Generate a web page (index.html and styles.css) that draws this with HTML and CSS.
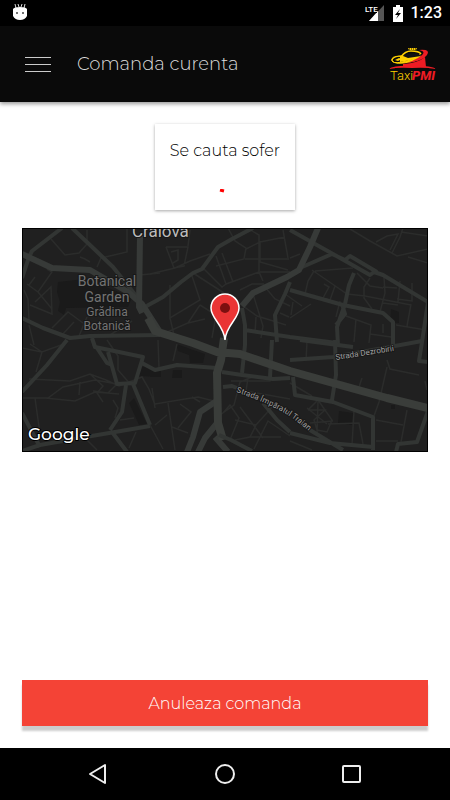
FILE: index.html
```html
<!DOCTYPE html>
<html lang="ro">
<head>
    <meta charset="UTF-8">
    <meta name="viewport" content="width=device-width, initial-scale=1.0">
    <title>Comanda curenta</title>
    <link rel="stylesheet" href="styles.css">
</head>
<body>
    <div class="status-bar">
        <svg class="droid" width="14" height="18" viewBox="0 0 14 18" aria-hidden="true">
            <path d="M3 4L2 0M6 3L5 0M8 3L9 0M11 4L12 0" stroke="#ddd" fill="none"/>
            <path d="M0 5Q1 3 7 3T14 5V12Q12 16 7 16T0 12Z" fill="#fff"/>
            <circle cx="4" cy="9" r="1" fill="#444"/>
            <circle cx="10" cy="9" r="1" fill="#444"/>
        </svg>
        <div class="status-icons">
            <svg width="20" height="18" viewBox="0 0 20 18" aria-hidden="true">
                <path d="M19 1V17H4Z" fill="#555"/>
                <path d="M13 7V17H4Z" fill="#fff"/>
                <path d="M0 0H12V9H0Z" fill="#000"/>
                <text x="0" y="8" class="lte">LTE</text>
            </svg>
            <svg width="10" height="17" viewBox="0 0 10 17" aria-hidden="true">
                <path d="M3 0H7V2H10V17H0V2H3Z" fill="#fff"/>
                <path d="M7 4L2 10H5L3 14L8 8H5Z" fill="#000"/>
            </svg>
            <span class="clock">1:23</span>
        </div>
    </div>

    <header class="app-bar">
        <button type="button" class="menu-button" aria-label="Meniu">
            <span></span><span></span><span></span>
        </button>
        <h1>Comanda curenta</h1>
        <svg class="logo" width="50" height="37" viewBox="387 46 50 37" role="img" aria-label="TaxiPMI">
            <path d="M408 48h9l-1 2h-7z" fill="#ffd000"/>
            <path d="M409 49h8" stroke="#111" stroke-dasharray="1 1"/>
            <path d="M401 57Q405 51 411 51Q419 51 421 54" fill="none" stroke="#ffd000" stroke-width="1.5"/>
            <path d="M402 56Q394 56 392 60Q392 64 402 62L420 58Q420 60 409 62Q396 65 392 61Q390 56 402 56Z" fill="#ffd000" stroke="#ffd000"/>
            <path d="M400 56L420 54L421 58L400 62Z" fill="#ffd000"/>
            <path d="M403 56Q408 52 419 54L421 56L408 58Z" fill="#111"/>
            <path d="M395 60l4-2 3 1-4 2z" fill="#ffd000"/>
            <path d="M419 50Q431 49 427 55Q423 61 407 63Q420 58 423 54Q425 51 419 50Z" fill="#ed1c24"/>
            <path d="M403 67V64Q418 63 425 57L426 67Q414 65 403 67Z" fill="#ed1c24"/>
            <path d="M388 69Q396 65 412 66Q428 65 437 69Q425 67 412 68Q399 67 388 69Z" fill="#ed1c24"/>
            <text x="390" y="80" class="logo-taxi">Taxi</text>
            <text x="412" y="80" class="logo-pmi">PMI</text>
        </svg>
    </header>

    <main class="content">
        <div class="card">
            <p>Se cauta sofer</p>
            <svg width="6" height="4" viewBox="0 0 6 4" aria-hidden="true">
                <path d="M1 1L5 2" stroke="#f00" stroke-width="3"/>
            </svg>
        </div>

        <div class="map">
            <svg viewBox="22 228 406 224" preserveAspectRatio="xMidYMid slice" role="img" aria-label="Harta Craiova">
                <rect x="22" y="228" width="406" height="224" fill="#202020"/>

                <!-- parks and buildings -->
                <g fill="#1a1a1a">
                    <path d="M58 282L85 279L132 297L128 307L66 308L64 315L58 311L60 302L57 292Z"/>
                    <path d="M391 309L399 312V323L390 322Z"/>
                    <path d="M129 403L134 398L147 424L139 425Z"/>
                    <path d="M140 366L160 371V377L139 376Z"/>
                    <path d="M176 344L205 354L203 363H190L189 355L178 351Z"/>
                    <path d="M150 371H161V377H150ZM173 370H182V378H172ZM339 411L353 413L352 425L338 423ZM391 405h4v4h-4z"/>
                </g>

                <g class="street">
                    <path d="M51 239L65 255L79 253L87 244V230M80 257L85 259L90 262M127 228V252L101 258L97 267"/>
                    <path d="M27 284L38 292L52 272L47 269M29 285L35 277M30 305L52 314L51 287L35 302M24 290L28 299L29 320M38 292L52 309"/>
                    <path d="M52 328L68 312L83 323M62 335L74 322M91 338L94 348M29 325L34 345M140 275L160 273M132 321L110 335M87 317L79 336"/>
                    <path d="M166 247H188L184 266L174 268L166 247M171 252L178 250V260L173 263M188 246L190 230M150 274L175 268L190 261L210 254"/>
                    <path d="M216 256L226 284L222 287L203 268M222 253L233 282M192 276L200 300L170 318V285M200 305L188 323L165 333M193 273L224 293M188 323L205 319M200 305L216 315L212 338M170 318L174 335"/>
                    <path d="M228 228L235 241L246 248L244 259L216 266M246 249L260 242L285 237M245 259H289M247 228L259 235V274M260 272H290M283 230L288 258M260 241V262L288 270M226 284L259 272L263 281M240 290L252 284H264"/>
                    <path d="M243 306L257 316L270 320L286 325M253 294L263 326L261 338M265 287L275 299L290 306M256 317L255 333M285 294L302 306M280 313L289 317"/>
                    <path d="M350 229L370 241L397 256L428 249M376 242L387 236L398 234L390 250M403 228L400 237L392 253M408 257L428 263M401 232L428 236"/>
                    <path d="M290 258L300 254M314 271L308 281L305 294L330 300L335 286M324 284L329 287L323 298M312 270L347 294L365 296M315 271L353 268M357 273L370 286L383 288M370 278L364 287V298L372 309M384 277L385 293L380 312M400 281L398 302M383 287L397 288M365 296L411 305M397 299L412 301V283M411 304L407 326M396 325L426 330M383 303L398 305"/>
                    <path d="M290 318L311 304M293 302L291 315M346 316L371 325L369 343M356 319L354 342M370 334L391 337M383 324V333M336 317L340 301"/>
                    <path d="M22 348L42 352L36 372M30 344L42 352L64 344M29 379L70 381L90 374L106 380L119 386M22 398L48 398L63 387L95 380M35 398L40 434M45 398L75 401L95 392L119 394M80 382L79 395M90 374L103 386L97 393L103 402M95 380L117 384L108 393L93 391M107 340L118 356V370L131 385"/>
                    <path d="M119 386L142 377L149 389L155 405M113 400L118 408L115 418M120 420L134 418M136 432L129 448M85 438L97 450M155 404L185 399L198 397L218 402M152 388L155 408M168 403L175 450M172 427L188 433M180 404L191 412L178 428M192 397L200 402"/>
                    <path d="M150 425L163 449M155 425L167 415M177 344L173 361M158 340L159 368M220 415L234 405L240 382L252 377M230 440L239 418L230 405L223 413M235 420L256 425L250 437L235 440M240 407L263 438M255 426L274 405M254 449L268 421L290 436M231 381H270L271 371M248 378L246 391L290 399M249 437H281"/>
                    <path d="M307 341L306 361M387 360L390 369L419 375M387 367L379 402L374 416M362 378L359 387M290 383L312 396M308 410L318 400L332 420L327 432L317 430L314 420L325 410L308 410M318 402L317 433M310 423L333 421M307 408L327 424M354 411L352 445M376 420L403 425M407 410L401 442M328 424L359 423L363 444M290 441L312 450M425 381L427 390M376 441H398"/>
                </g>

                <g class="road">
                    <path d="M62 228L32 251L29 257L22 278"/>
                    <path d="M22 318L43 328L70 338L90 336L160 335"/>
                    <path d="M67 340L47 365L22 392"/>
                    <path d="M72 228L90 245L113 267L137 297"/>
                    <path d="M143 308L163 297L181 282L193 273L202 269L218 247L232 239L253 228"/>
                    <path d="M92 338L95 347L143 357L135 383L117 384L108 352M97 348L107 363L112 365M142 363L155 370L177 365L217 368"/>
                    <path d="M126 385L122 412L110 430M133 384L150 425M22 413L40 447M22 451L40 445L80 438L150 426M112 432L127 452"/>
                    <path d="M242 308L245 325V345L242 373M245 330L290 337L337 343M277 342L275 315L285 294L290 282"/>
                    <path d="M222 372L242 375L273 379L290 378M223 387L232 386L237 388M263 403L277 420L290 432"/>
                    <path d="M290 230L333 254L370 275L374 272L383 275L428 302M300 268L332 254L345 260L350 256L377 272M354 273L349 285L345 304L337 327L338 345M342 304L345 314L336 325"/>
                    <path d="M290 290L343 305L383 313L393 322V345M428 302L422 342L419 361L428 362"/>
                    <path d="M272 340L270 377M290 360L333 357L395 346L422 341M300 340L353 347M335 340L336 375L332 400M293 377L295 395L333 402L373 417V450M290 433L330 443L373 447M300 423L310 430L343 450M428 411L417 442L398 444L396 452"/>
                </g>

                <g class="avenue">
                    <path d="M22 254L52 268L90 270L128 292L142 304L160 332"/>
                    <path d="M140 236L139 307L142 313"/>
                    <path d="M318 228L310 247L299 270L287 277L253 293L242 306"/>
                    <path d="M218 400L200 412L193 437L187 452M218 422L205 438L198 452M215 437L228 452"/>
                </g>
                <path class="avenue-wide" d="M148 318L155 331L193 343L217 352L240 354L290 371L333 383L387 398L428 408M224 338L221 360L217 373L218 423L223 440"/>
                <path class="road" d="M219 435L231 440L252 451"/>

                <text x="132" y="237" class="city">Craiova</text>
                <g class="park">
                    <text x="107" y="286">Botanical</text>
                    <text x="107" y="302">Garden</text>
                    <text x="107" y="316" class="park-small">Grădina</text>
                    <text x="107" y="330" class="park-small">Botanică</text>
                </g>
                <text class="street-name" transform="translate(336 360) rotate(-9)">Strada Dezrobirii</text>
                <path id="traian" d="M236 392Q262 401 283 412Q298 421 320 441" fill="none"/>
                <text class="street-name"><textPath href="#traian">Strada Împăratul Traian</textPath></text>

                <!-- pin -->
                <path d="M225 340C224 325 211 319 211 308A14 14 0 0 1 239 308C239 319 226 325 225 340Z" fill="#ea3535" stroke="#fff" stroke-width="1.5"/>
                <circle cx="225" cy="308" r="5" fill="#7c1010"/>

                <text x="28" y="440" class="google">Google</text>
            </svg>
        </div>

        <button type="button" class="cancel-button">Anuleaza comanda</button>
    </main>

    <nav class="nav-bar">
        <button type="button" aria-label="Inapoi">
            <svg width="24" height="24" viewBox="0 0 24 24"><path d="M19 3V21L4 12Z"/></svg>
        </button>
        <button type="button" aria-label="Acasa">
            <svg width="24" height="24" viewBox="0 0 24 24"><circle cx="12" cy="12" r="9"/></svg>
        </button>
        <button type="button" aria-label="Aplicatii recente">
            <svg width="24" height="24" viewBox="0 0 24 24"><rect x="3" y="4" width="17" height="16" rx="1"/></svg>
        </button>
    </nav>
</body>
</html>
```

FILE: styles.css
```css
* {
    box-sizing: border-box;
}
body {
    margin: 0;
    min-height: 100vh;
    display: flex;
    flex-direction: column;
    font-family: Montserrat, Inter, sans-serif;
    font-weight: 300;
    background-color: #fff;
}
button {
    border: none;
    padding: 0;
    background: none;
    font: inherit;
    cursor: pointer;
}
svg {
    display: block;
}
.status-bar {
    display: flex;
    justify-content: space-between;
    align-items: center;
    height: 26px;
    padding: 0 8px 0 13px;
    background-color: #000;
}
.status-icons {
    display: flex;
    align-items: center;
    gap: 8px;
}
.clock {
    color: #fff;
    font-family: Roboto, sans-serif;
    font-size: 16px;
    font-weight: 500;
    line-height: 26px;
}
.lte {
    fill: #fff;
    font-family: Roboto, sans-serif;
    font-size: 8px;
    font-weight: 500;
}
.app-bar {
    display: flex;
    align-items: center;
    height: 76px;
    padding: 0 13px 0 25px;
    background-color: #0a0a0a;
    box-shadow: 0 2px 4px rgba(0, 0, 0, 0.4);
}
.menu-button {
    display: flex;
    flex-direction: column;
    gap: 6px;
    width: 26px;
}
.menu-button span {
    height: 1px;
    background-color: #ccc;
}
.app-bar h1 {
    flex: 1;
    margin: 0 0 0 26px;
    color: #ddd;
    font-size: 18px;
    font-weight: 300;
    line-height: 24px;
}
.logo-taxi,
.logo-pmi {
    font-family: Roboto, sans-serif;
    font-size: 13px;
}
.logo-taxi {
    fill: #ffd000;
    font-weight: 300;
}
.logo-pmi {
    fill: #ed1c24;
    font-weight: 800;
    font-style: italic;
}
.content {
    flex: 1;
    display: flex;
    flex-direction: column;
    padding: 22px;
}
.card {
    display: flex;
    flex-direction: column;
    align-items: center;
    align-self: center;
    gap: 26px;
    min-width: 140px;
    padding: 15px 15px 17px;
    background-color: #fff;
    box-shadow: 0 1px 3px rgba(0, 0, 0, 0.35);
}
.card p {
    margin: 0;
    color: #000;
    font-size: 16px;
    line-height: 24px;
}
.card svg {
    margin-right: 6px;
}
.map {
    height: 224px;
    margin-top: 18px;
    outline: 1px solid #000;
    outline-offset: -1px;
}
.map svg {
    width: 100%;
    height: 100%;
}
.street {
    fill: none;
    stroke: #2b2c2b;
    stroke-width: 1.5;
}
.road,
.avenue,
.avenue-wide {
    fill: none;
    stroke: #323533;
    stroke-width: 4;
    stroke-linejoin: round;
}
.avenue {
    stroke: #373a38;
    stroke-width: 6;
}
.avenue-wide {
    stroke: #3a3d3a;
    stroke-width: 8;
}
.city,
.park,
.street-name,
.google {
    font-family: Roboto, sans-serif;
    font-weight: 400;
    stroke: #181818;
    stroke-width: 2;
    paint-order: stroke;
}
.city {
    fill: #bdbdbd;
    font-size: 17px;
}
.park {
    fill: #737373;
    font-size: 14px;
    text-anchor: middle;
}
.park-small {
    font-size: 12px;
}
.street-name {
    fill: #a0a0a0;
    font-size: 8px;
}
.google {
    fill: #fff;
    stroke: #000;
    font-family: Montserrat, sans-serif;
    font-size: 17px;
    font-weight: 500;
}
.cancel-button {
    height: 46px;
    margin-top: auto;
    background-color: #f44336;
    color: #fff;
    font-size: 16px;
    box-shadow: 0 5px 2px rgba(0, 0, 0, 0.2);
}
.nav-bar {
    display: grid;
    grid-template-columns: repeat(3, 1fr);
    height: 52px;
    padding: 0 35px;
    background-color: #000;
}
.nav-bar button {
    display: flex;
    justify-content: center;
    align-items: center;
}
.nav-bar svg {
    fill: none;
    stroke: #eee;
    stroke-width: 2;
    stroke-linejoin: round;
}
```
